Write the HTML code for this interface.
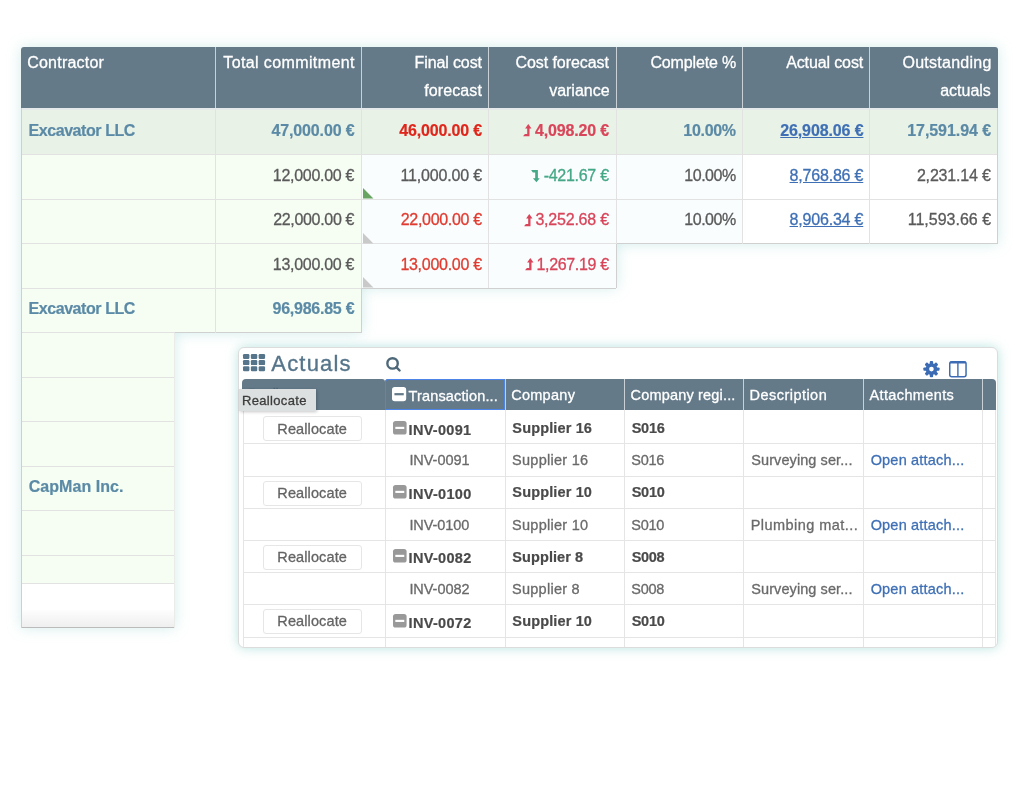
<!DOCTYPE html>
<html><head><meta charset="utf-8"><title>Cost control</title>
<style>
html,body{margin:0;padding:0;background:#fff;}
body{width:1024px;height:801px;position:relative;overflow:hidden;font-family:"Liberation Sans",sans-serif;font-size:16px;color:#5a5a5a;}
.abs{position:absolute;}
.shape{position:absolute;left:0;top:0;width:1024px;height:801px;filter:drop-shadow(0 0 7px rgba(90,190,180,0.27));}
.t{position:absolute;white-space:nowrap;height:20px;line-height:20px;-webkit-text-stroke-width:0.3px;}
.b{font-weight:700;-webkit-text-stroke-width:0.2px;}
.hd{color:#fff;}
.sl{color:#5b8aa6;}
.lk{text-decoration:underline;}
.vl{position:absolute;width:1px;}
.hl{position:absolute;height:1px;}
svg{position:absolute;overflow:visible;}
</style></head><body><div id="wrap" style="position:absolute;left:0;top:0;width:1024px;height:801px;will-change:transform">

<div class="shape">
<div class="abs" style="left:21px;top:47px;width:976.50px;height:61.00px;background:#647a89;border-radius:3px 3px 0 0;"></div>
<div class="abs" style="left:21px;top:108px;width:977.00px;height:46.30px;background:#e9f2e6;"></div>
<div class="abs" style="left:21px;top:154.3px;width:340.50px;height:89.10px;background:#f6fef3;"></div>
<div class="abs" style="left:361.5px;top:154.3px;width:381.30px;height:89.70px;background:#f9fdfe;"></div>
<div class="abs" style="left:742.8px;top:154.3px;width:255.20px;height:89.70px;background:#fff;border-radius:0 0 2px 0;"></div>
<div class="abs" style="left:21px;top:243.4px;width:340.50px;height:44.60px;background:#f6fef3;"></div>
<div class="abs" style="left:361.5px;top:243.4px;width:255.00px;height:45.10px;background:#f9fdfe;border-radius:0 0 2px 0;"></div>
<div class="abs" style="left:21px;top:288px;width:341.00px;height:45.00px;background:#f6fef3;border-radius:0 0 2px 0;"></div>
<div class="abs" style="left:21px;top:332.5px;width:154.00px;height:250.90px;background:#f6fef3;"></div>
<div class="abs" style="left:21px;top:583.4px;width:154.00px;height:26.60px;background:#fff;"></div>
<div class="abs" style="left:21px;top:610px;width:154.00px;height:17.60px;background:linear-gradient(#fdfdfd,#eeeeee);border-radius:0 0 2px 2px;"></div>
</div>
<div class="abs" style="left:21px;top:108px;width:977.00px;height:2.00px;background:#e6e9e9;"></div>
<div class="hl" style="left:21px;top:154px;width:977.00px;background:#e2e2e2"></div>
<div class="hl" style="left:21px;top:198.5px;width:977.00px;background:#e2e2e2"></div>
<div class="hl" style="left:21px;top:243px;width:595.00px;background:#e2e2e2"></div>
<div class="hl" style="left:616px;top:243px;width:381.50px;background:#d0d0d0"></div>
<div class="hl" style="left:21px;top:287.5px;width:341.00px;background:#e2e2e2"></div>
<div class="hl" style="left:362px;top:287.5px;width:254.00px;background:#d0d0d0"></div>
<div class="hl" style="left:21px;top:332px;width:154.00px;background:#e2e2e2"></div>
<div class="hl" style="left:175px;top:332px;width:186.50px;background:#d0d0d0"></div>
<div class="hl" style="left:21px;top:376.5px;width:154.00px;background:#e2e2e2"></div>
<div class="hl" style="left:21px;top:421px;width:154.00px;background:#e2e2e2"></div>
<div class="hl" style="left:21px;top:465.5px;width:154.00px;background:#e2e2e2"></div>
<div class="hl" style="left:21px;top:510px;width:154.00px;background:#e2e2e2"></div>
<div class="hl" style="left:21px;top:554.5px;width:154.00px;background:#e2e2e2"></div>
<div class="hl" style="left:21px;top:583px;width:154.00px;background:#e2e2e2"></div>
<div class="hl" style="left:21px;top:627px;width:154.00px;background:#bbbbbb"></div>
<div class="vl" style="left:215px;top:47px;height:61.00px;background:#c9d1d6"></div>
<div class="vl" style="left:361px;top:47px;height:61.00px;background:#c9d1d6"></div>
<div class="vl" style="left:488px;top:47px;height:61.00px;background:#c9d1d6"></div>
<div class="vl" style="left:616px;top:47px;height:61.00px;background:#c9d1d6"></div>
<div class="vl" style="left:742px;top:47px;height:61.00px;background:#c9d1d6"></div>
<div class="vl" style="left:869px;top:47px;height:61.00px;background:#c9d1d6"></div>
<div class="vl" style="left:215px;top:109px;height:223.50px;background:#e2e2e2"></div>
<div class="vl" style="left:361px;top:109px;height:179.00px;background:#e2e2e2"></div>
<div class="vl" style="left:361px;top:288px;height:44.50px;background:#d0d0d0"></div>
<div class="vl" style="left:488px;top:109px;height:179.00px;background:#e2e2e2"></div>
<div class="vl" style="left:616px;top:109px;height:134.50px;background:#e2e2e2"></div>
<div class="vl" style="left:616px;top:243.5px;height:44.50px;background:#d0d0d0"></div>
<div class="vl" style="left:742px;top:109px;height:134.50px;background:#e2e2e2"></div>
<div class="vl" style="left:869px;top:109px;height:134.50px;background:#e2e2e2"></div>
<div class="vl" style="left:997px;top:108px;height:135.50px;background:#d0d0d0"></div>
<div class="vl" style="left:21px;top:108px;height:519.60px;background:#cfcfcf"></div>
<div class="vl" style="left:174px;top:332.5px;height:295.10px;background:#e9ece8"></div>
<div class="t hd" style="top:53px;left:27.20px;letter-spacing:0.230px;">Contractor</div>
<div class="t hd" style="top:53px;left:223.33px;letter-spacing:0.381px;">Total commitment</div>
<div class="t hd" style="top:53px;left:414.62px;letter-spacing:-0.124px;">Final cost</div>
<div class="t hd" style="top:81px;left:424.14px;letter-spacing:0.126px;">forecast</div>
<div class="t hd" style="top:53px;left:515.40px;letter-spacing:-0.062px;">Cost forecast</div>
<div class="t hd" style="top:81px;left:549.20px;letter-spacing:-0.020px;">variance</div>
<div class="t hd" style="top:53px;left:650.40px;letter-spacing:-0.149px;">Complete %</div>
<div class="t hd" style="top:53px;left:786.20px;letter-spacing:-0.124px;">Actual cost</div>
<div class="t hd" style="top:53px;left:902.48px;letter-spacing:0.254px;">Outstanding</div>
<div class="t hd" style="top:81px;left:940.16px;">actuals</div>
<div class="t b sl" style="top:121px;left:28.46px;letter-spacing:-0.422px;">Excavator LLC</div>
<div class="t b sl" style="top:121px;left:271.56px;letter-spacing:-0.150px;">47,000.00 €</div>
<div class="t b" style="top:121px;left:399.16px;letter-spacing:-0.150px;color:#e0251b;">46,000.00 €</div>
<div class="t b" style="top:121px;left:534.96px;letter-spacing:-0.158px;color:#d9455a;">4,098.20 €</div>
<svg style="left:522.8px;top:123.9px" width="8.5" height="12.3" viewBox="0 0 8.5 12.3"><path d="M5.3 0 L8.5 4.6 H6.5 V12.3 H0.6 Q0 12.3 0.4 11.8 L1.9 9.9 H4.2 V4.6 H2.1 Z" fill="#d9455a"/></svg>
<div class="t b sl" style="top:121px;left:683.34px;letter-spacing:-0.312px;">10.00%</div>
<div class="t b lk" style="top:121px;left:780.22px;letter-spacing:-0.116px;color:#3f70b5;">26,908.06 €</div>
<div class="t b sl" style="top:121px;left:907.24px;letter-spacing:-0.068px;">17,591.94 €</div>
<div class="t" style="top:166px;left:272.80px;letter-spacing:-0.282px;">12,000.00 €</div>
<div class="t" style="top:166px;left:400.40px;letter-spacing:-0.162px;">11,000.00 €</div>
<div class="t" style="top:166px;left:543.66px;letter-spacing:-0.275px;color:#45a886;">-421.67 €</div>
<svg style="left:531.4px;top:169.6px" width="8.7" height="12.3" viewBox="0 0 8.7 12.3"><path d="M5.5 12.3 L8.7 8.2 H6.9 V0 H0.6 Q0 0 0.4 0.5 L1.9 2.6 H4.2 V8.2 H1.9 Z" fill="#45a886"/></svg>
<div class="t" style="top:166px;left:684.30px;letter-spacing:-0.472px;">10.00%</div>
<div class="t lk" style="top:166px;left:789.56px;letter-spacing:-0.189px;color:#3f70b5;">8,768.86 €</div>
<div class="t" style="top:166px;left:916.90px;letter-spacing:-0.171px;">2,231.14 €</div>
<div class="t" style="top:210px;left:273.20px;letter-spacing:-0.322px;">22,000.00 €</div>
<div class="t" style="top:210px;left:400.80px;letter-spacing:-0.322px;color:#e03c31;">22,000.00 €</div>
<div class="t" style="top:210px;left:535.44px;letter-spacing:-0.220px;color:#d9455a;">3,252.68 €</div>
<svg style="left:523.6px;top:213.8px" width="8.5" height="12.3" viewBox="0 0 8.5 12.3"><path d="M5.3 0 L8.5 4.6 H6.5 V12.3 H0.6 Q0 12.3 0.4 11.8 L1.9 9.9 H4.2 V4.6 H2.1 Z" fill="#d9455a"/></svg>
<div class="t" style="top:210px;left:684.30px;letter-spacing:-0.472px;">10.00%</div>
<div class="t lk" style="top:210px;left:789.56px;letter-spacing:-0.189px;color:#3f70b5;">8,906.34 €</div>
<div class="t" style="top:210px;left:907.70px;">11,593.66 €</div>
<div class="t" style="top:255px;left:272.80px;letter-spacing:-0.282px;">13,000.00 €</div>
<div class="t" style="top:255px;left:400.40px;letter-spacing:-0.282px;color:#e03c31;">13,000.00 €</div>
<div class="t" style="top:255px;left:536.50px;letter-spacing:-0.338px;color:#d9455a;">1,267.19 €</div>
<svg style="left:525.3px;top:258.3px" width="8.5" height="12.3" viewBox="0 0 8.5 12.3"><path d="M5.3 0 L8.5 4.6 H6.5 V12.3 H0.6 Q0 12.3 0.4 11.8 L1.9 9.9 H4.2 V4.6 H2.1 Z" fill="#d9455a"/></svg>
<div class="t b sl" style="top:299px;left:28.46px;letter-spacing:-0.422px;">Excavator LLC</div>
<div class="t b sl" style="top:299px;left:272.52px;letter-spacing:-0.246px;">96,986.85 €</div>
<div class="t b sl" style="top:477px;left:28.76px;letter-spacing:0.042px;">CapMan Inc.</div>
<svg style="left:363px;top:188.0px" width="10.4" height="10.5" viewBox="0 0 10 10"><path d="M0 0 L10 10 H0 Z" fill="#68a562"/></svg>
<svg style="left:363px;top:232.5px" width="10.4" height="10.5" viewBox="0 0 10 10"><path d="M0 0 L10 10 H0 Z" fill="#c9c9c9"/></svg>
<svg style="left:363px;top:277.1px" width="10.4" height="10.5" viewBox="0 0 10 10"><path d="M0 0 L10 10 H0 Z" fill="#c9c9c9"/></svg>
<div class="abs" style="left:238px;top:347px;width:760px;height:301px;box-sizing:border-box;background:#fff;border:1px solid #dcdcdc;border-radius:6px;box-shadow:0 0 12px rgba(80,190,175,0.40);"></div>
<div class="abs" style="left:238px;top:347px;width:760px;height:300px;overflow:hidden;border-radius:6px"><div class="abs" style="left:-238px;top:-347px;width:1024px;height:801px">
<svg style="left:243.1px;top:353.9px" width="22.1" height="17.2" viewBox="0 0 22.1 17.2"><rect x="0" y="0" width="6.4" height="5.0" rx="1.2" fill="#56758a"/><rect x="0" y="6.1" width="6.4" height="5.0" rx="1.2" fill="#56758a"/><rect x="0" y="12.2" width="6.4" height="5.0" rx="1.2" fill="#56758a"/><rect x="7.85" y="0" width="6.4" height="5.0" rx="1.2" fill="#56758a"/><rect x="7.85" y="6.1" width="6.4" height="5.0" rx="1.2" fill="#56758a"/><rect x="7.85" y="12.2" width="6.4" height="5.0" rx="1.2" fill="#56758a"/><rect x="15.7" y="0" width="6.4" height="5.0" rx="1.2" fill="#56758a"/><rect x="15.7" y="6.1" width="6.4" height="5.0" rx="1.2" fill="#56758a"/><rect x="15.7" y="12.2" width="6.4" height="5.0" rx="1.2" fill="#56758a"/></svg>
<div class="t" style="top:354px;left:271.30px;font-size:22px;letter-spacing:1.185px;color:#56758a;-webkit-text-stroke:0.35px #56758a;">Actuals</div>
<svg style="left:380px;top:350px" width="30" height="30" viewBox="380 350 30 30"><circle cx="392.55" cy="363.4" r="5.2" fill="none" stroke="#4e6879" stroke-width="2.4"/><path d="M396.3 367.2 L399.6 370.5" stroke="#4e6879" stroke-width="2.4" stroke-linecap="round"/></svg>
<svg style="left:923px;top:360.8px" width="16.9" height="16.2" viewBox="-10 -10 20 20"><g fill="#3b6cb4"><rect x="-2.1" y="-10" width="4.2" height="20" rx="1.2" transform="rotate(0)"/><rect x="-2.1" y="-10" width="4.2" height="20" rx="1.2" transform="rotate(45)"/><rect x="-2.1" y="-10" width="4.2" height="20" rx="1.2" transform="rotate(90)"/><rect x="-2.1" y="-10" width="4.2" height="20" rx="1.2" transform="rotate(135)"/><circle r="7.3"/></g><circle r="2.9" fill="#fff"/></svg>
<svg style="left:949.3px;top:360.8px" width="17.8" height="16.4" viewBox="0 0 17.8 16.4"><rect x="0.75" y="0.75" width="16.3" height="14.9" rx="2" fill="none" stroke="#3b6cb4" stroke-width="1.5"/><path d="M8.9 1 V15.6" stroke="#3b6cb4" stroke-width="1.4"/><path d="M1 1.6 H16.8" stroke="#3b6cb4" stroke-width="2"/></svg>
<div class="abs" style="left:242px;top:379px;width:143.00px;height:30.60px;background:#647a89;border-radius:4px 3px 0 0;"></div>
<div class="abs" style="left:385.2px;top:379px;width:610.60px;height:30.60px;background:#647a89;border-radius:3px 4px 0 0;"></div>
<div class="vl" style="left:505px;top:379px;height:30.60px;background:#c9d1d6"></div>
<div class="vl" style="left:624px;top:379px;height:30.60px;background:#c9d1d6"></div>
<div class="vl" style="left:743px;top:379px;height:30.60px;background:#c9d1d6"></div>
<div class="vl" style="left:863px;top:379px;height:30.60px;background:#c9d1d6"></div>
<div class="vl" style="left:982px;top:379px;height:30.60px;background:#c9d1d6"></div>
<div class="abs" style="left:385.2px;top:379px;width:119.40000000000003px;height:30.600000000000023px;box-sizing:border-box;border:1px solid #4d84e8;border-radius:3px 0 0 0"></div>
<svg style="left:391.9px;top:386.8px" width="14.2" height="14.2" viewBox="0 0 14 14"><rect width="14" height="14" rx="2.7" fill="#fff"/><rect x="2.4" y="6" width="9.2" height="2.2" fill="#647a89"/></svg>
<div class="t hd" style="top:386px;left:408.61px;font-size:14.5px;letter-spacing:0.141px;">Transaction...</div>
<div class="t hd" style="top:385px;left:511.17px;font-size:14.5px;letter-spacing:0.278px;">Company</div>
<div class="t hd" style="top:385px;left:630.57px;font-size:14.5px;letter-spacing:0.176px;">Company regi...</div>
<div class="t hd" style="top:385px;left:749.54px;font-size:14.5px;letter-spacing:0.463px;">Description</div>
<div class="t hd" style="top:385px;left:869.50px;font-size:14.5px;letter-spacing:0.369px;">Attachments</div>
<div class="hl" style="left:243px;top:443px;width:753.00px;background:#e5e5e5"></div>
<div class="hl" style="left:243px;top:476px;width:753.00px;background:#e5e5e5"></div>
<div class="hl" style="left:243px;top:508px;width:753.00px;background:#e5e5e5"></div>
<div class="hl" style="left:243px;top:540px;width:753.00px;background:#e5e5e5"></div>
<div class="hl" style="left:243px;top:572px;width:753.00px;background:#e5e5e5"></div>
<div class="hl" style="left:243px;top:604px;width:753.00px;background:#e5e5e5"></div>
<div class="hl" style="left:243px;top:637px;width:753.00px;background:#e5e5e5"></div>
<div class="vl" style="left:385px;top:409.6px;height:238.40px;background:#e5e5e5"></div>
<div class="vl" style="left:505px;top:409.6px;height:238.40px;background:#e5e5e5"></div>
<div class="vl" style="left:624px;top:409.6px;height:238.40px;background:#e5e5e5"></div>
<div class="vl" style="left:743px;top:409.6px;height:238.40px;background:#e5e5e5"></div>
<div class="vl" style="left:863px;top:409.6px;height:238.40px;background:#e5e5e5"></div>
<div class="vl" style="left:982px;top:409.6px;height:238.40px;background:#e5e5e5"></div>
<div class="vl" style="left:243px;top:409.6px;height:238.40px;background:#e5e5e5"></div>
<div class="vl" style="left:995px;top:409.6px;height:238.40px;background:#e5e5e5"></div>
<div class="abs" style="left:262.5px;top:416px;width:99px;height:25px;box-sizing:border-box;border:1px solid #e6e6e6;border-radius:3px;background:#fff"></div>
<div class="t" style="top:419px;left:277.34px;font-size:14.5px;letter-spacing:0.114px;color:#646464;">Reallocate</div>
<svg style="left:393.3px;top:421px" width="13.6" height="13.6" viewBox="0 0 14 14"><rect width="14" height="14" rx="2.7" fill="#999999"/><rect x="2.4" y="6" width="9.2" height="2.2" fill="#fff"/></svg>
<div class="t b" style="top:420px;left:408.56px;font-size:14.5px;letter-spacing:0.306px;color:#4a4a4a;">INV-0091</div>
<div class="t b" style="top:418px;left:512.34px;font-size:14.5px;letter-spacing:0.142px;color:#4a4a4a;">Supplier 16</div>
<div class="t b" style="top:418px;left:631.64px;font-size:14.5px;letter-spacing:-0.229px;color:#4a4a4a;">S016</div>
<div class="t" style="top:450px;left:409.39px;font-size:14.5px;letter-spacing:-0.044px;color:#6a6a6a;">INV-0091</div>
<div class="t" style="top:450px;left:512.05px;font-size:14.5px;letter-spacing:0.276px;color:#6a6a6a;">Supplier 16</div>
<div class="t" style="top:450px;left:631.35px;font-size:14.5px;letter-spacing:-0.275px;color:#6a6a6a;">S016</div>
<div class="t" style="top:450px;left:751.25px;font-size:14.5px;letter-spacing:0.085px;color:#6a6a6a;">Surveying ser...</div>
<div class="t" style="top:450px;left:870.65px;font-size:14.5px;letter-spacing:0.194px;color:#3f70b5;">Open attach...</div>
<div class="abs" style="left:262.5px;top:481px;width:99px;height:25px;box-sizing:border-box;border:1px solid #e6e6e6;border-radius:3px;background:#fff"></div>
<div class="t" style="top:483px;left:277.34px;font-size:14.5px;letter-spacing:0.114px;color:#646464;">Reallocate</div>
<svg style="left:393.3px;top:485px" width="13.6" height="13.6" viewBox="0 0 14 14"><rect width="14" height="14" rx="2.7" fill="#999999"/><rect x="2.4" y="6" width="9.2" height="2.2" fill="#fff"/></svg>
<div class="t b" style="top:484px;left:408.56px;font-size:14.5px;letter-spacing:0.326px;color:#4a4a4a;">INV-0100</div>
<div class="t b" style="top:482px;left:512.34px;font-size:14.5px;letter-spacing:0.142px;color:#4a4a4a;">Supplier 10</div>
<div class="t b" style="top:482px;left:631.64px;font-size:14.5px;letter-spacing:-0.229px;color:#4a4a4a;">S010</div>
<div class="t" style="top:515px;left:409.39px;font-size:14.5px;letter-spacing:-0.065px;color:#6a6a6a;">INV-0100</div>
<div class="t" style="top:515px;left:512.05px;font-size:14.5px;letter-spacing:0.269px;color:#6a6a6a;">Supplier 10</div>
<div class="t" style="top:515px;left:631.35px;font-size:14.5px;letter-spacing:-0.299px;color:#6a6a6a;">S010</div>
<div class="t" style="top:515px;left:750.74px;font-size:14.5px;letter-spacing:0.442px;color:#6a6a6a;">Plumbing mat...</div>
<div class="t" style="top:515px;left:870.65px;font-size:14.5px;letter-spacing:0.194px;color:#3f70b5;">Open attach...</div>
<div class="abs" style="left:262.5px;top:545px;width:99px;height:25px;box-sizing:border-box;border:1px solid #e6e6e6;border-radius:3px;background:#fff"></div>
<div class="t" style="top:547px;left:277.34px;font-size:14.5px;letter-spacing:0.114px;color:#646464;">Reallocate</div>
<svg style="left:393.3px;top:549px" width="13.6" height="13.6" viewBox="0 0 14 14"><rect width="14" height="14" rx="2.7" fill="#999999"/><rect x="2.4" y="6" width="9.2" height="2.2" fill="#fff"/></svg>
<div class="t b" style="top:548px;left:408.56px;font-size:14.5px;letter-spacing:0.326px;color:#4a4a4a;">INV-0082</div>
<div class="t b" style="top:547px;left:512.34px;font-size:14.5px;letter-spacing:0.080px;color:#4a4a4a;">Supplier 8</div>
<div class="t b" style="top:547px;left:631.64px;font-size:14.5px;letter-spacing:-0.278px;color:#4a4a4a;">S008</div>
<div class="t" style="top:579px;left:409.39px;font-size:14.5px;letter-spacing:-0.044px;color:#6a6a6a;">INV-0082</div>
<div class="t" style="top:579px;left:512.05px;font-size:14.5px;letter-spacing:0.254px;color:#6a6a6a;">Supplier 8</div>
<div class="t" style="top:579px;left:631.35px;font-size:14.5px;letter-spacing:-0.275px;color:#6a6a6a;">S008</div>
<div class="t" style="top:579px;left:751.25px;font-size:14.5px;letter-spacing:0.085px;color:#6a6a6a;">Surveying ser...</div>
<div class="t" style="top:579px;left:870.65px;font-size:14.5px;letter-spacing:0.194px;color:#3f70b5;">Open attach...</div>
<div class="abs" style="left:262.5px;top:609px;width:99px;height:25px;box-sizing:border-box;border:1px solid #e6e6e6;border-radius:3px;background:#fff"></div>
<div class="t" style="top:611px;left:277.34px;font-size:14.5px;letter-spacing:0.114px;color:#646464;">Reallocate</div>
<svg style="left:393.3px;top:614px" width="13.6" height="13.6" viewBox="0 0 14 14"><rect width="14" height="14" rx="2.7" fill="#999999"/><rect x="2.4" y="6" width="9.2" height="2.2" fill="#fff"/></svg>
<div class="t b" style="top:613px;left:408.56px;font-size:14.5px;letter-spacing:0.326px;color:#4a4a4a;">INV-0072</div>
<div class="t b" style="top:611px;left:512.34px;font-size:14.5px;letter-spacing:0.142px;color:#4a4a4a;">Supplier 10</div>
<div class="t b" style="top:611px;left:631.64px;font-size:14.5px;letter-spacing:-0.229px;color:#4a4a4a;">S010</div>
</div></div>
<div class="t" style="top:384px;left:247.84px;font-size:14.5px;letter-spacing:-0.530px;color:#4f6575;">Reallocate</div>
<div class="abs" style="left:238.6px;top:389.3px;width:77.1px;height:21.4px;background:#dde0e0;box-shadow:1px 1px 3px rgba(0,0,0,0.22)"></div>
<div class="t" style="top:391px;left:242.06px;font-size:13px;letter-spacing:0.326px;color:#3c3c3c;">Reallocate</div>
</div></body></html>
